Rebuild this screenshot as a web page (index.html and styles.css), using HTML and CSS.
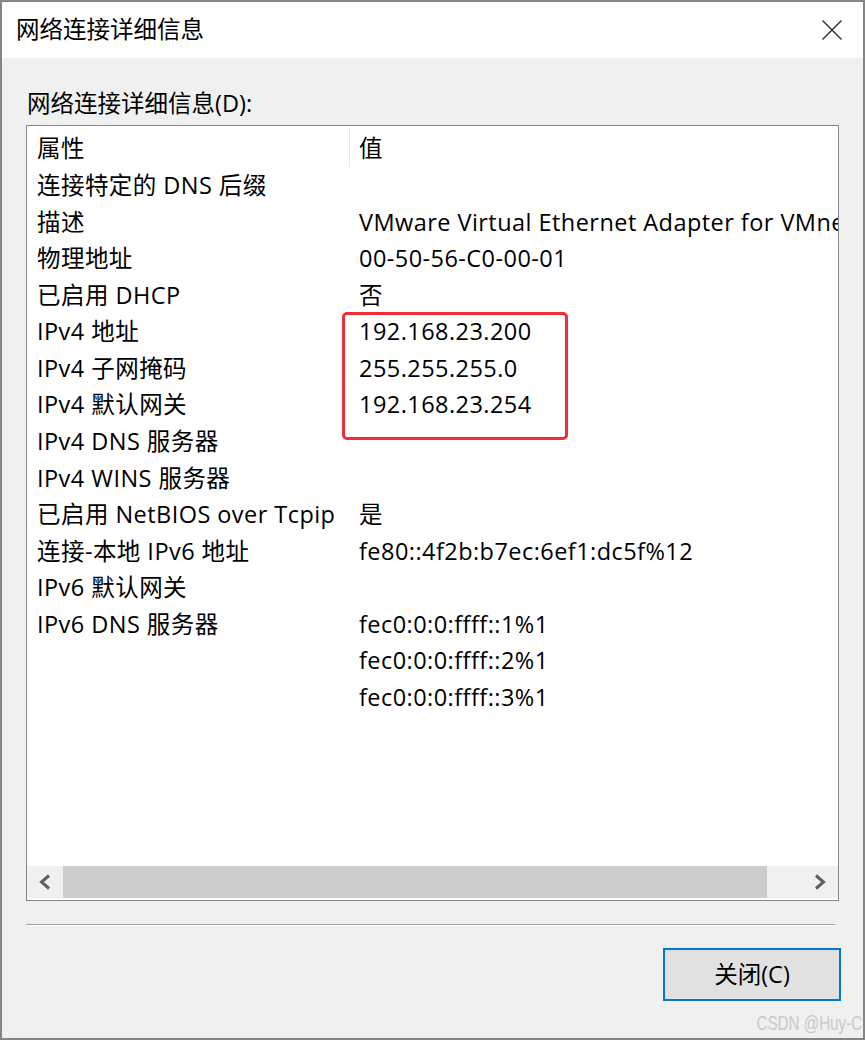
FILE: index.html
```html
<!DOCTYPE html>
<html lang="zh-CN">
<head>
<meta charset="utf-8">
<title>网络连接详细信息</title>
<link rel="stylesheet" href="styles.css">
</head>
<body>
<div class="window">
  <div class="titlebar">
    <span class="title">网络连接详细信息</span>
    <svg class="close" width="20" height="20" viewBox="0 0 20 20"><path d="M0.5 0.5 L19.5 19.5 M19.5 0.5 L0.5 19.5" stroke="#2b2b2b" stroke-width="1.4" fill="none"/></svg>
  </div>
  <div class="content">
    <div class="label">网络连接详细信息(D):</div>
    <div class="listbox">
      <div class="list">
        <div class="row header"><div class="c1">属性</div><div class="c2">值</div></div>
        <div class="row"><div class="c1">连接特定的 DNS 后缀</div><div class="c2"></div></div>
        <div class="row"><div class="c1">描述</div><div class="c2">VMware Virtual Ethernet Adapter for VMnet1</div></div>
        <div class="row"><div class="c1">物理地址</div><div class="c2">00-50-56-C0-00-01</div></div>
        <div class="row"><div class="c1">已启用 DHCP</div><div class="c2">否</div></div>
        <div class="row"><div class="c1">IPv4 地址</div><div class="c2">192.168.23.200</div></div>
        <div class="row"><div class="c1">IPv4 子网掩码</div><div class="c2">255.255.255.0</div></div>
        <div class="row"><div class="c1">IPv4 默认网关</div><div class="c2">192.168.23.254</div></div>
        <div class="row"><div class="c1">IPv4 DNS 服务器</div><div class="c2"></div></div>
        <div class="row"><div class="c1">IPv4 WINS 服务器</div><div class="c2"></div></div>
        <div class="row"><div class="c1">已启用 NetBIOS over Tcpip</div><div class="c2">是</div></div>
        <div class="row"><div class="c1">连接-本地 IPv6 地址</div><div class="c2">fe80::4f2b:b7ec:6ef1:dc5f%12</div></div>
        <div class="row"><div class="c1">IPv6 默认网关</div><div class="c2"></div></div>
        <div class="row"><div class="c1">IPv6 DNS 服务器</div><div class="c2">fec0:0:0:ffff::1%1</div></div>
        <div class="row"><div class="c1"></div><div class="c2">fec0:0:0:ffff::2%1</div></div>
        <div class="row"><div class="c1"></div><div class="c2">fec0:0:0:ffff::3%1</div></div>
      </div>
      <div class="hscroll">
        <div class="sbtn"><svg width="14" height="16" viewBox="0 0 14 16"><polyline points="11,1.5 3.5,8 11,14.5" fill="none" stroke="#5f5f5f" stroke-width="3"/></svg></div>
        <div class="thumb"></div>
        <div class="track"></div>
        <div class="sbtn"><svg width="14" height="16" viewBox="0 0 14 16"><polyline points="3,1.5 10.5,8 3,14.5" fill="none" stroke="#5f5f5f" stroke-width="3"/></svg></div>
      </div>
      <div class="highlight"></div>
    </div>
    <div class="separator"></div>
    <div class="actions">
      <button class="btn">关闭(C)</button>
    </div>
  </div>
  <div class="watermark">CSDN @Huy-C</div>
</div>
</body>
</html>
```
FILE: styles.css
```css
html, body {
  margin: 0;
  padding: 0;
}
body {
  width: 865px;
  height: 1040px;
  overflow: hidden;
  font-family: "Open Sans", "Noto Sans CJK SC", sans-serif;
  color: #000;
}
.window {
  position: relative;
  box-sizing: border-box;
  width: 865px;
  height: 1040px;
  border: 2px solid #858585;
  display: flex;
  flex-direction: column;
  background: #f0f0f0;
}
.titlebar {
  height: 56px;
  flex: none;
  background: #fff;
  display: flex;
  align-items: center;
  justify-content: space-between;
  padding: 0 21px 0 14px;
}
.title {
  font-size: 23.5px;
  line-height: 30px;
  margin-top: -2px;
}
.close {
  display: block;
  margin-top: -1px;
}
.content {
  flex: 1;
  display: flex;
  flex-direction: column;
  padding: 30px 24px 0 24px;
}
.label {
  font-size: 23.5px;
  line-height: 30px;
  padding-left: 1px;
}
.listbox {
  position: relative;
  margin-top: 7px;
  height: 776px;
  box-sizing: border-box;
  border: 1px solid #828790;
  background: #fff;
  display: flex;
  flex-direction: column;
  overflow: hidden;
  padding-bottom: 2px;
}
.list {
  flex: 1;
  font-size: 23.5px;
  letter-spacing: 0.45px;
}
.row {
  display: flex;
  height: 36.57px;
  line-height: 36.57px;
  white-space: nowrap;
}
.row.header {
  height: 41px;
}
.c1 {
  width: 323px;
  flex: none;
  padding-left: 10px;
  box-sizing: border-box;
}
.c2 {
  padding-left: 9px;
}
.header .c1 {
  border-right: 1px solid #e5e5e5;
  height: 39px;
  margin-top: 2px;
  line-height: 41px;
}
.header .c2 {
  line-height: 45px;
}
.hscroll {
  height: 32px;
  flex: none;
  display: flex;
  background: #f0f0f0;
}
.sbtn {
  width: 36px;
  display: flex;
  align-items: center;
  justify-content: center;
}
.thumb {
  width: 704px;
  background: #cdcdcd;
}
.track {
  flex: 1;
}
.highlight {
  position: absolute;
  left: 315px;
  top: 186px;
  width: 226px;
  height: 128px;
  box-sizing: border-box;
  border: 3px solid #ef2f35;
  border-radius: 5px;
}
.separator {
  margin-top: 23px;
  width: 809px;
  height: 1px;
  background: #a0a0a0;
  border-bottom: 1px solid #fff;
}
.actions {
  margin-top: 22px;
  display: flex;
  justify-content: flex-end;
  margin-right: -2px;
}
.btn {
  width: 178px;
  height: 53px;
  box-sizing: border-box;
  border: 2px solid #0078d7;
  background: #e1e1e1;
  font-family: "Open Sans", "Noto Sans CJK SC", sans-serif;
  font-size: 23.5px;
  color: #000;
  padding: 0;
  line-height: 49px;
}
.watermark {
  position: absolute;
  right: 1px;
  bottom: 3px;
  font-family: "Liberation Sans", Arial, sans-serif;
  font-size: 20px;
  color: #c9c9c9;
  transform: scaleX(0.76);
  transform-origin: right center;
  white-space: nowrap;
}
```
